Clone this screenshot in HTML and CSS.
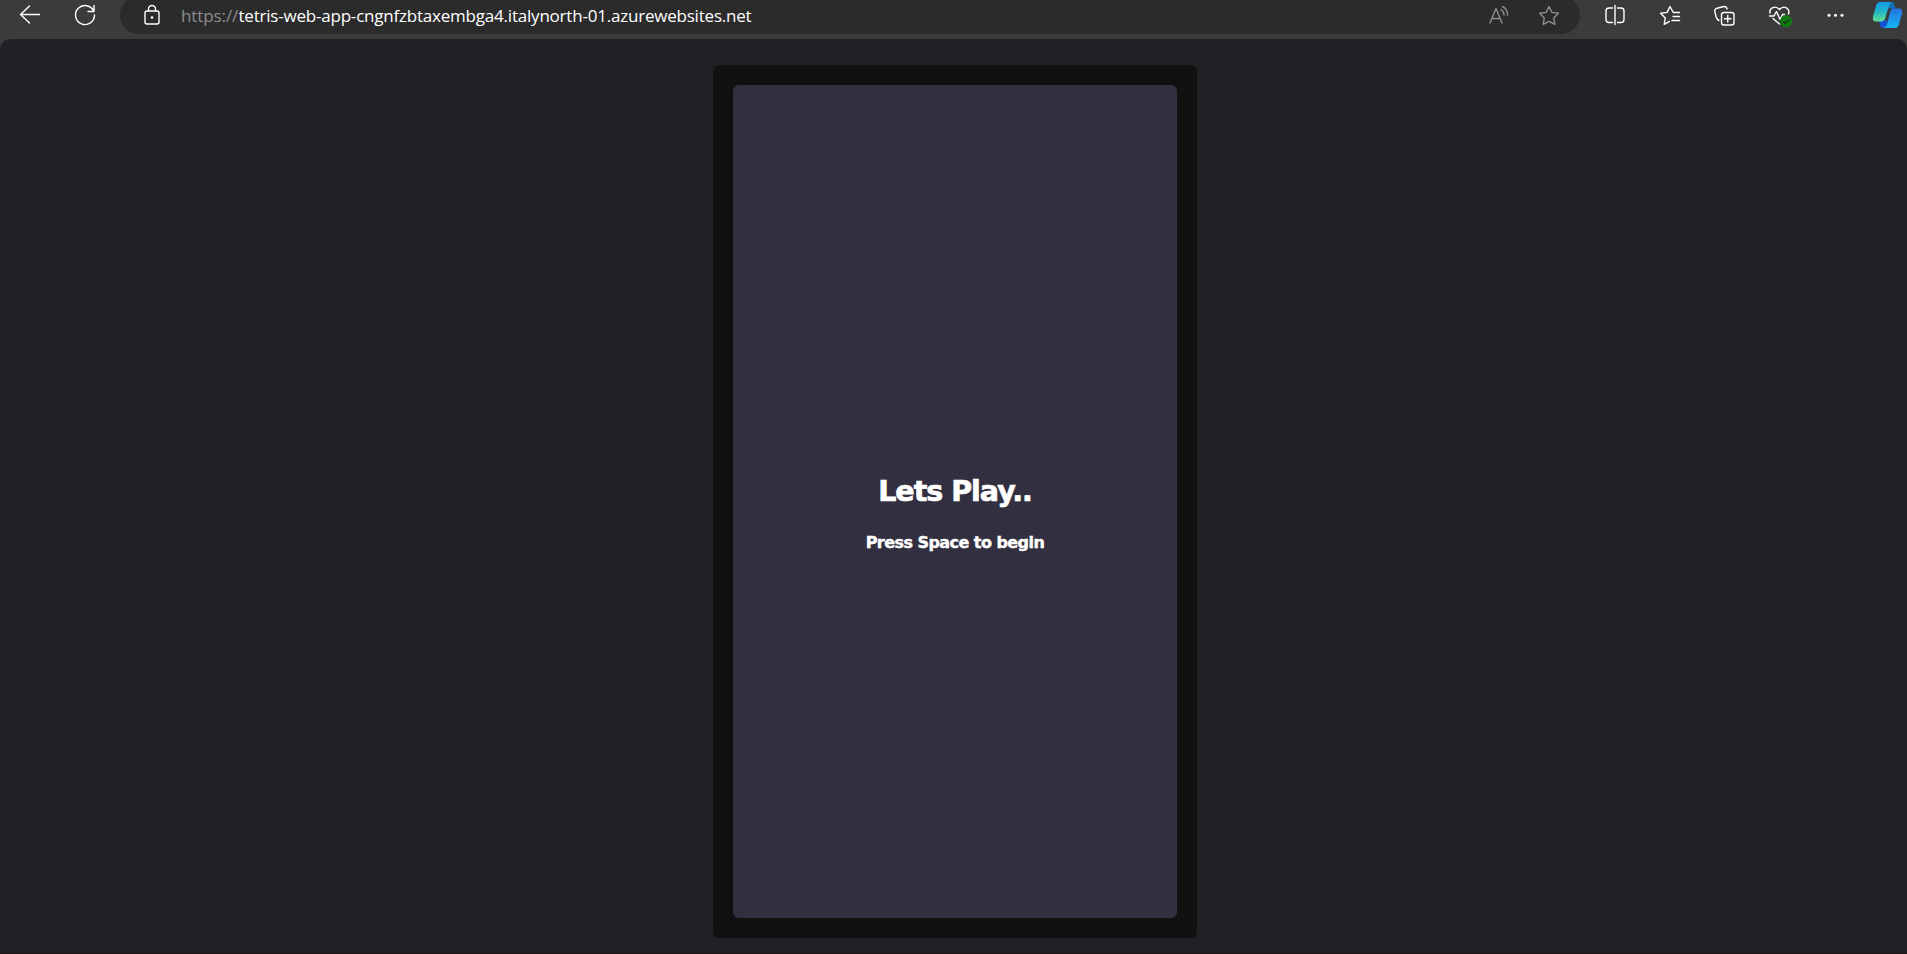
FILE: index.html
```html
<!DOCTYPE html>
<html lang="en">
<head>
<meta charset="utf-8">
<title>Tetris</title>
<link rel="stylesheet" href="styles.css">
</head>
<body>
<header class="toolbar">
  <nav class="nav">
    <svg class="icon" width="24" height="30" viewBox="0 0 24 30"><path d="M21.500 14.500H2.500M11.500 6l-9 8.500L11.500 23"/></svg>
    <svg class="icon" width="24" height="30" viewBox="0 0 24 30"><path d="M20.8 11.5A9.5 9.5 0 1 0 21.5 15M21 5.5v6h-6"/></svg>
  </nav>
  <div class="address">
    <svg class="icon lock" width="18" height="30" viewBox="0 0 18 30"><rect x="2" y="11" width="14" height="13" rx="2"/><path d="M5.5 11V9a3.5 3.5 0 0 1 7 0v2"/><circle class="solid" cx="9" cy="17.5" r="1.3"/></svg>
    <div class="url"><span class="scheme">https://</span><span class="host">tetris-web-app-cngnfzbtaxembga4.italynorth-01.azurewebsites.net</span></div>
    <div class="page-actions">
      <svg class="icon dim" width="24" height="30" viewBox="0 0 24 30"><path d="M2 23L8 8.500 14 23M4 18.500h8M13 9.500q3 1.800 3 5.500M14.500 6.500q5 2.500 5 8.500"/></svg>
      <svg class="icon dim" width="24" height="30" viewBox="0 0 24 30"><path d="M12 6.500l2.900 5.900 6.500.9-4.700 4.600 1.100 6.500-5.800-3.100-5.800 3.100 1.100-6.500-4.700-4.600 6.500-.9z"/></svg>
    </div>
  </div>
  <div class="tools">
    <svg class="icon" width="24" height="30" viewBox="0 0 24 30"><path d="M9.500 8H6a3 3 0 0 0-3 3v8.500a3 3 0 0 0 3 3h3.500M14.500 8H18a3 3 0 0 1 3 3v8.500a3 3 0 0 1-3 3h-3.500M12 5.500v19"/></svg>
    <svg class="icon" width="24" height="30" viewBox="0 0 24 30"><path d="M21.500 12.500h-6.200L12 6.500l-2.900 5.900-6.500.9 4.700 4.600-1.100 6.500 5.300-3M15 16.500h6.500M14 20.500h7.500"/></svg>
    <svg class="icon" width="24" height="30" viewBox="0 0 24 30"><rect x="8.500" y="12.500" width="12.500" height="12.500" rx="2.500"/><path d="M14.750 15.500v6.500M11.500 18.750H18M6 20.500Q3.800 19.500 3 16.500L1.800 11.500Q1.300 9 3.800 8.300L11 6.500Q13.500 6.200 14 9"/></svg>
    <svg class="icon" width="24" height="30" viewBox="0 0 24 30"><path d="M2 13C1 8.500 7 4.500 11.500 9.500 16 4.500 22.500 8.500 20.500 14M1.500 16H6l2.500-4.500 3.500 8 2.500-5h2M5 18.500l6.500 5.500"/><circle class="badge" cx="18" cy="21.300" r="6"/><path class="tick" d="M15 21.500l2 2 4-4"/></svg>
    <svg class="icon" width="24" height="30" viewBox="0 0 24 30"><circle class="solid" cx="5" cy="15.300" r="1.500"/><circle class="solid" cx="11.500" cy="15.300" r="1.500"/><circle class="solid" cx="18" cy="15.300" r="1.500"/></svg>
  </div>
  <svg class="copilot" width="31" height="30" viewBox="0 0 31 30">
    <defs>
      <linearGradient id="left" x1="0" y1="0" x2="0" y2="1"><stop offset="0" stop-color="#159bea"/><stop offset=".5" stop-color="#22b6c4"/><stop offset="1" stop-color="#63dc98"/></linearGradient>
      <linearGradient id="right" x1="0" y1="0" x2="0" y2="1"><stop offset="0" stop-color="#2474df"/><stop offset="1" stop-color="#16b4f4"/></linearGradient>
    </defs>
    <path fill="#126fb5" d="M16 2h3.500Q22 2 22.500 5l1 3.500h-8z"/>
    <path fill="#1454d4" d="M7 20.500h9L14 28h-3Q8.500 28 8 25z"/>
    <path fill="url(#left)" d="M8 2H20Q17.500 3 16.500 7L13.500 17.500Q12.500 21.500 9 21.500H4Q0 21.500 1 16.500L4 6Q5 2 8 2z"/>
    <path fill="url(#right)" d="M21 8.500h6q4 0 3 5l-3 10.500q-1 4-4 4H11.500q3-1 4-5L18 12.500q1-4 3-4z"/>
  </svg>
</header>
<main class="page">
  <section class="board">
    <div class="screen">
      <h1 class="title">Lets Play..</h1>
      <p class="hint">Press Space to begin</p>
    </div>
  </section>
</main>
</body>
</html>
```
FILE: styles.css
```css
* { box-sizing: border-box; }
body { margin: 0; height: 954px; overflow: hidden; background: #3b3b3b; }
.toolbar { display: flex; height: 39px; align-items: flex-start; }
.nav { display: flex; width: 120px; padding-left: 18px; gap: 31px; flex: none; }
.icon { display: block; flex: none; fill: none; stroke: #fff; stroke-width: 1.4; stroke-linecap: round; stroke-linejoin: round; }
.icon .solid { fill: #fff; stroke: none; }
.icon.dim { stroke: #8d8d8d; }
.icon .badge { fill: #107c10; stroke: none; }
.icon .tick { stroke: #163b16; }
.address { display: flex; width: 1460px; height: 38px; margin-top: -4px; padding: 4px 19px 0 23px; border-radius: 19px; background: #2b2b2b; flex: none; }
.url { display: flex; margin-left: 20px; font: 17px/31px "Open Sans", "Noto Sans", sans-serif; white-space: nowrap; }
.scheme { width: 57.5px; color: #8d8d8d; letter-spacing: -0.1px; }
.host { color: #fff; letter-spacing: -0.21px; }
.page-actions { display: flex; gap: 25px; margin-left: auto; }
.tools { display: flex; gap: 31.3px; margin-left: 22.500px; flex: none; }
.copilot { display: block; margin-left: 24.300px; flex: none; }
.page { display: flex; justify-content: center; height: 915px; padding: 26px 0 0 3px; border-bottom: 1px solid #1b1517; border-radius: 10px 10px 0 0; background: #212025; }
.board { width: 484px; height: 873px; padding: 20px; border-radius: 6px; background: #111; }
.screen { display: flex; flex-direction: column; align-items: center; height: 833px; padding-top: 387px; border-radius: 6px; background: #323040; color: #fff; font-family: "DejaVu Sans", sans-serif; font-weight: 700; }
.title { margin: 0; font-size: 28.5px; line-height: 40px; letter-spacing: -1px; white-space: nowrap; -webkit-text-stroke: 0.7px #fff; }
.hint { margin: 19px 0 0; font-size: 16px; line-height: 24px; letter-spacing: -0.55px; white-space: nowrap; -webkit-text-stroke: 0.4px #fff; }
```
